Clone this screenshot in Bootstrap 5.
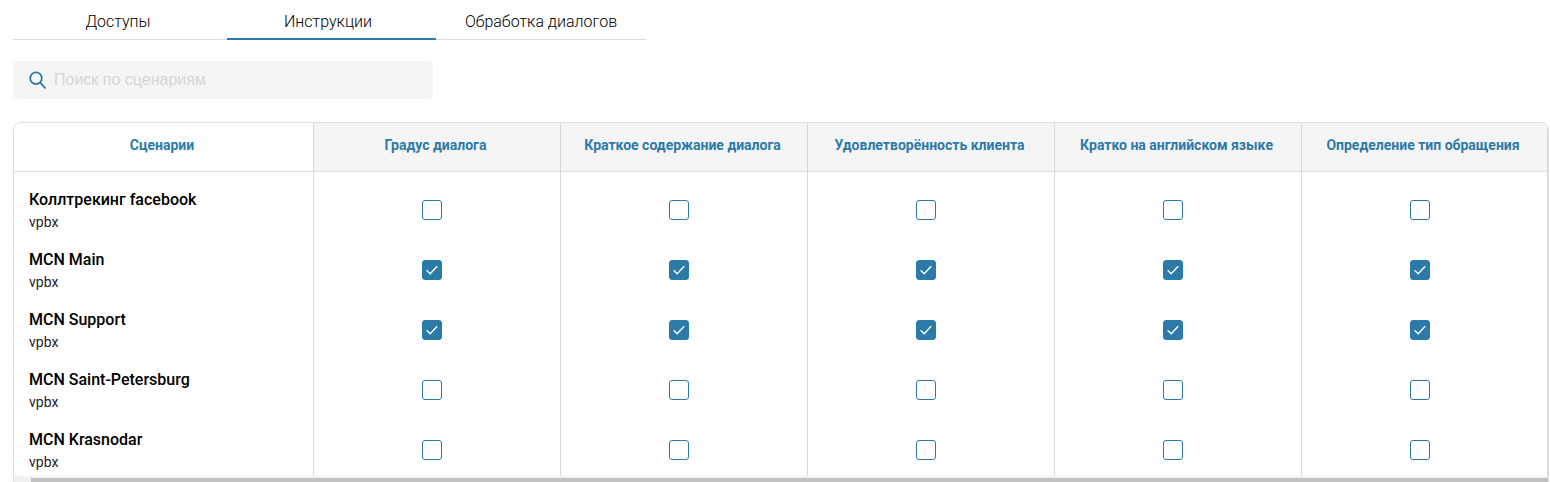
<!doctype html>
<html lang="ru">
<head>
<meta charset="utf-8">
<title>Инструкции</title>
<link href="https://cdn.jsdelivr.net/npm/bootstrap@5.3.0/dist/css/bootstrap.min.css" rel="stylesheet">
<style>
html,body{height:482px;overflow:hidden;background:#fff}
body{font-family:Roboto,"Liberation Sans",sans-serif;color:#000}
.page-wrap{padding:0 1px 0 13px}
.tab-strip{width:633px;height:40px;border-bottom:1px solid #d9d9d9}
.tab-strip .nav-link{height:40px;padding:13px 0 0;font-size:16px;font-weight:300;line-height:18px;color:#000;text-align:center;border-bottom:2px solid transparent;margin-bottom:-1px}
.tab-a{width:214px;padding-right:4px!important}
.tab-b{width:209px;padding-right:7px!important;border-bottom-color:#2b7aa8!important}
.tab-c{width:210px}
.search-box{width:420px;height:38px;margin-top:21px;background:#f5f5f5;border-radius:5px;padding-left:16px}
.search-box input{font-family:"Liberation Sans",Arial,sans-serif;font-size:16px;background:transparent;border:0;outline:0;padding:0;margin-left:8px;flex:1;color:#000}
.search-box input::placeholder{color:#d6d6d6;opacity:1}
.grid-card{margin-top:23px;height:360px;border:1px solid #e0e0e0;border-bottom:0;border-radius:8px 8px 0 0;overflow:hidden}
.grid-scroll{height:353px;overflow:hidden}
.grid-table{table-layout:fixed;border-collapse:separate;border-spacing:0;width:1534px}
.grid-table th{height:49px;padding:0 3px 3px 0;text-align:center;font-size:14px;font-weight:700;color:#2b7aa8;background:#f5f5f5;border-bottom:1px solid #e0e0e0;border-right:1px solid #d9d9d9;vertical-align:middle}
.grid-table th:first-child{background:#fff}
.grid-table td{height:60px;padding:0 10px 0 0;border-right:1px solid #d9d9d9;text-align:center;vertical-align:middle}
.grid-table tbody tr:first-child td{height:68px;padding-top:8px}
.grid-table td:first-child{text-align:left;padding-left:15px;padding-right:0}
.row-name{font-size:16px;font-weight:500;line-height:20px}
.row-sub{font-size:14px;line-height:16px;margin-top:4px;padding-bottom:1px;color:#222}
.grid-table .form-check-input{width:20px;height:20px;display:block;margin:0 auto;border:1.5px solid #2b7aa8;border-radius:3px;background-color:#fff;float:none}
.grid-table .form-check-input:checked{background-color:#2b7aa8;border-color:#2b7aa8;background-size:14px 14px;background-image:url("data:image/svg+xml,%3csvg xmlns='http://www.w3.org/2000/svg' viewBox='0 0 14 14'%3e%3cpath fill='none' stroke='%23fff' stroke-width='1.3' d='M1.6 7.2l3.6 3.6 7-7.6'/%3e%3c/svg%3e")}
.scroll-track{height:6px;background:#f1f1f1;padding:2px 0 0 17px}
.scroll-thumb{height:4px;background:#c1c1c1}
</style>
</head>
<body>
<div class="page-wrap">
  <ul class="nav tab-strip">
    <li class="nav-item"><a class="nav-link tab-a" href="#">Доступы</a></li>
    <li class="nav-item"><a class="nav-link tab-b" href="#">Инструкции</a></li>
    <li class="nav-item"><a class="nav-link tab-c" href="#">Обработка диалогов</a></li>
  </ul>
  <div class="search-box d-flex align-items-center">
    <svg width="17" height="18" viewBox="0 0 17 18" fill="none" stroke="#2b7aa8" stroke-width="1.8"><circle cx="7" cy="7.2" r="5.8"/><path d="M11 11.4l5 5.4" stroke-linecap="round"/></svg>
    <input type="text" placeholder="Поиск по сценариям">
  </div>
  <div class="grid-card">
    <div class="grid-scroll">
      <table class="grid-table">
        <colgroup><col style="width:300px"><col style="width:247px"><col style="width:247px"><col style="width:247px"><col style="width:247px"><col style="width:246px"></colgroup>
        <thead>
          <tr>
            <th>Сценарии</th><th>Градус диалога</th><th>Краткое содержание диалога</th><th>Удовлетворённость клиента</th><th>Кратко на английском языке</th><th>Определение тип обращения</th>
          </tr>
        </thead>
        <tbody>
          <tr>
            <td><div class="row-name">Коллтрекинг facebook</div><div class="row-sub">vpbx</div></td>
            <td><input class="form-check-input" type="checkbox"></td><td><input class="form-check-input" type="checkbox"></td><td><input class="form-check-input" type="checkbox"></td><td><input class="form-check-input" type="checkbox"></td><td><input class="form-check-input" type="checkbox"></td>
          </tr>
          <tr>
            <td><div class="row-name">MCN Main</div><div class="row-sub">vpbx</div></td>
            <td><input class="form-check-input" type="checkbox" checked></td><td><input class="form-check-input" type="checkbox" checked></td><td><input class="form-check-input" type="checkbox" checked></td><td><input class="form-check-input" type="checkbox" checked></td><td><input class="form-check-input" type="checkbox" checked></td>
          </tr>
          <tr>
            <td><div class="row-name">MCN Support</div><div class="row-sub">vpbx</div></td>
            <td><input class="form-check-input" type="checkbox" checked></td><td><input class="form-check-input" type="checkbox" checked></td><td><input class="form-check-input" type="checkbox" checked></td><td><input class="form-check-input" type="checkbox" checked></td><td><input class="form-check-input" type="checkbox" checked></td>
          </tr>
          <tr>
            <td><div class="row-name">MCN Saint-Petersburg</div><div class="row-sub">vpbx</div></td>
            <td><input class="form-check-input" type="checkbox"></td><td><input class="form-check-input" type="checkbox"></td><td><input class="form-check-input" type="checkbox"></td><td><input class="form-check-input" type="checkbox"></td><td><input class="form-check-input" type="checkbox"></td>
          </tr>
          <tr>
            <td><div class="row-name">MCN Krasnodar</div><div class="row-sub">vpbx</div></td>
            <td><input class="form-check-input" type="checkbox"></td><td><input class="form-check-input" type="checkbox"></td><td><input class="form-check-input" type="checkbox"></td><td><input class="form-check-input" type="checkbox"></td><td><input class="form-check-input" type="checkbox"></td>
          </tr>
        </tbody>
      </table>
    </div>
    <div class="scroll-track"><div class="scroll-thumb"></div></div>
  </div>
</div>
<script src="https://cdn.jsdelivr.net/npm/bootstrap@5.3.0/dist/js/bootstrap.bundle.min.js"></script>
</body>
</html>
